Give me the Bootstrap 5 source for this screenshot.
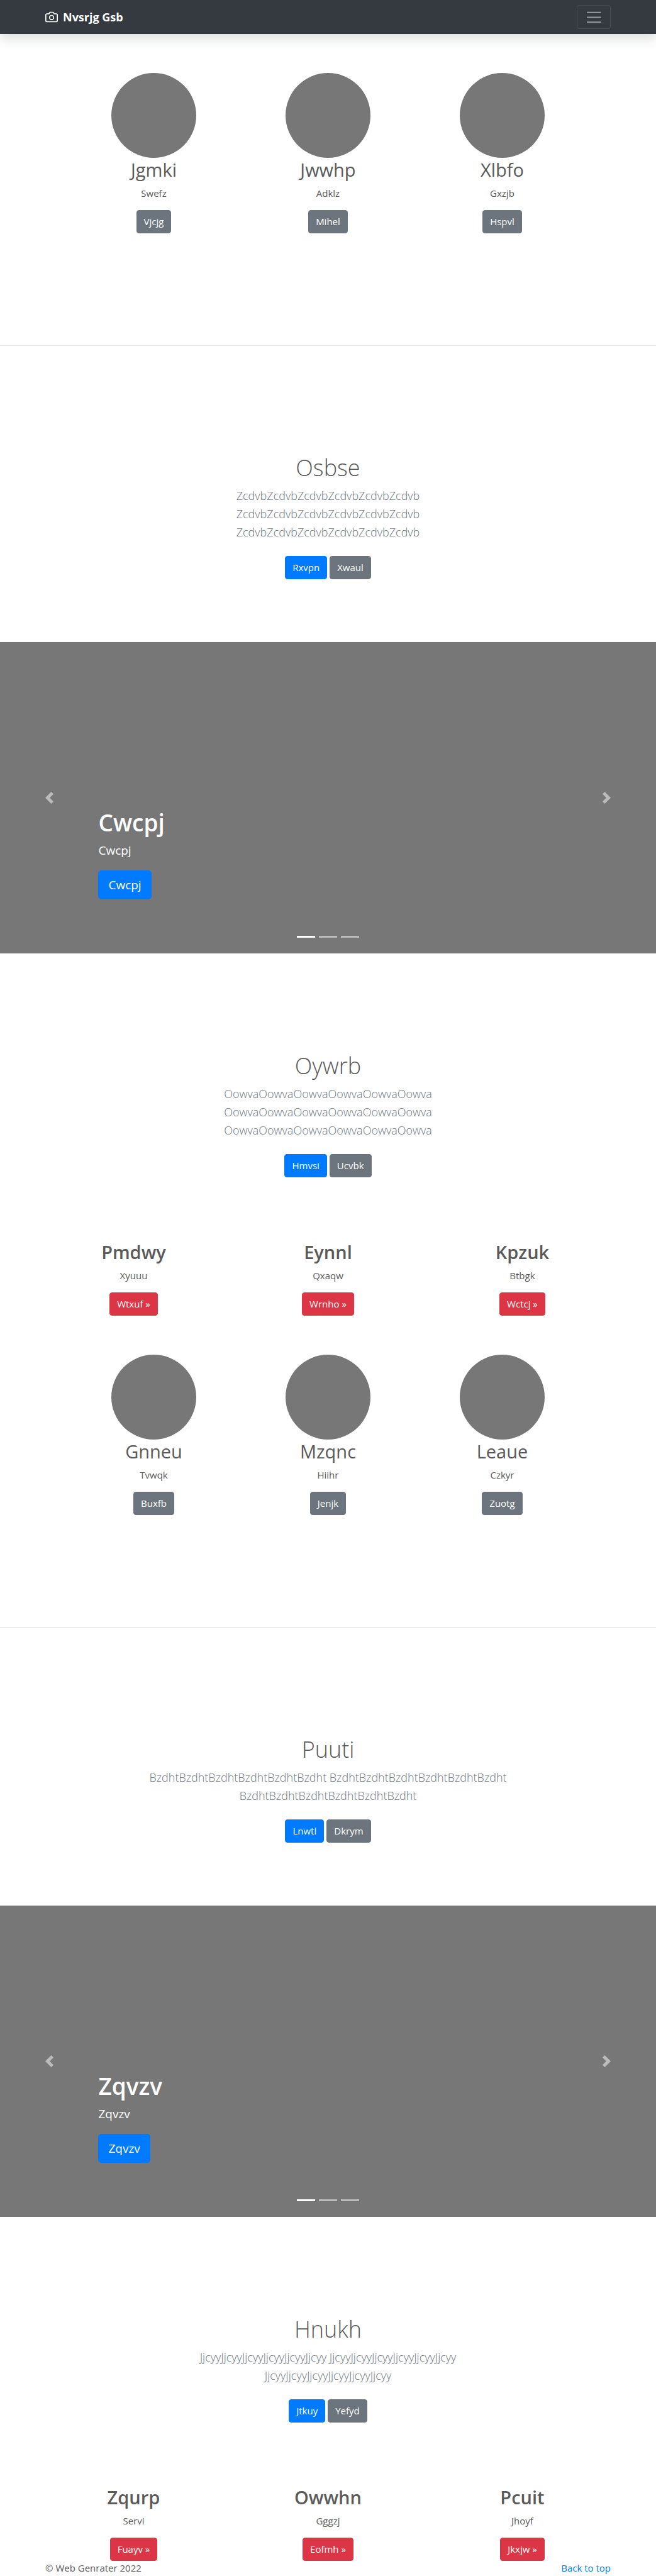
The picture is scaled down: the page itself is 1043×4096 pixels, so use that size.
<!DOCTYPE html>
<html lang="en">
<head>
<meta charset="utf-8">
<meta name="viewport" content="width=device-width, initial-scale=1">
<title>Nvsrjg Gsb</title>
<link href="https://cdn.jsdelivr.net/npm/bootstrap@5.3.0/dist/css/bootstrap.min.css" rel="stylesheet">
<style>
  body { font-family: "Open Sans", "Noto Sans", sans-serif; font-size: 15px; line-height: 23px; color: #5a5a5a; }
  a { color: #007bff; }
  .bar-top { background: #343a40; padding: 8px 0; }
  .page-wrap { max-width: 899px; }
  .brand-text { font-size: 18px; line-height: 27px; }
  .navbar-toggler { width: 54px; height: 38px; padding: 0; border-color: rgba(255,255,255,.1); border-radius: 4px; color: rgba(255,255,255,.5); }
  .btn { font-size: 15px; line-height: 23px; padding: 6px 11px; border-radius: 4px; color: #fff; }
  .btn-lg { font-size: 19px; line-height: 28px; padding: 8px 15px; border-radius: 5px; }
  .btn-primary { --bs-btn-bg: #007bff; --bs-btn-border-color: #007bff; }
  .people { max-width: 831px; padding-top: 62px; padding-bottom: 178px; }
  .avatar { width: 135px; height: 135px; background: #777; }
  .item-title { font-size: 29px; line-height: 37px; margin-bottom: 8px; }
  .item-text { margin-bottom: 15px; }
  .divider { margin: 0; border-color: #000; opacity: .1; }
  .intro { padding-top: 171px; padding-bottom: 100px; }
  .intro-after { padding-top: 156px; }
  .intro-title { font-size: 36px; line-height: 46px; margin-bottom: 7px; }
  .intro-text { max-width: 590px; font-size: 18px; line-height: 29px; color: #6c757d; margin-bottom: 23px; }
  .features { max-width: 927px; }
  .slide-area { height: 495px; background: #777; }
  .slide-area .carousel-caption { bottom: 86px; padding: 0; }
  .slide-title { font-size: 37px; line-height: 46px; margin-bottom: 7px; }
  .slide-text { font-size: 19px; line-height: 29px; margin-bottom: 17px; }
  .carousel-indicators { margin-bottom: 15px; }
  .carousel-indicators [data-bs-target] { width: 29px; }
</style>
</head>
<body>
<header id="top">
  <nav class="navbar navbar-dark bar-top shadow">
    <div class="container-fluid page-wrap p-0">
      <a class="navbar-brand d-flex align-items-center p-0 m-0 gap-2" href="#">
        <svg width="20" height="20" viewBox="0 0 24 24" fill="none" stroke="currentColor" stroke-width="2" stroke-linecap="round" stroke-linejoin="round" aria-hidden="true"><path d="M23 19a2 2 0 0 1-2 2H3a2 2 0 0 1-2-2V8a2 2 0 0 1 2-2h4l2-3h6l2 3h4a2 2 0 0 1 2 2z"/><circle cx="12" cy="13" r="4"/></svg>
        <strong class="brand-text">Nvsrjg Gsb</strong>
      </a>
      <button class="navbar-toggler d-flex align-items-center justify-content-center" type="button" aria-label="Toggle navigation">
        <svg width="29" height="29" viewBox="0 0 30 30" stroke="currentColor" stroke-width="2" stroke-linecap="round" aria-hidden="true"><path d="M4 7h22M4 15h22M4 23h22"/></svg>
      </button>
    </div>
  </nav>
</header>

<main>
  <section class="container-fluid people px-0 text-center">
    <div class="row g-0">
      <div class="col-4"><div class="avatar rounded-circle mx-auto"></div><h2 class="item-title fw-normal">Jgmki</h2><p class="item-text">Swefz</p><a class="btn btn-secondary" href="#">Vjcjg</a></div>
      <div class="col-4"><div class="avatar rounded-circle mx-auto"></div><h2 class="item-title fw-normal">Jwwhp</h2><p class="item-text">Adklz</p><a class="btn btn-secondary" href="#">Mihel</a></div>
      <div class="col-4"><div class="avatar rounded-circle mx-auto"></div><h2 class="item-title fw-normal">Xlbfo</h2><p class="item-text">Gxzjb</p><a class="btn btn-secondary" href="#">Hspvl</a></div>
    </div>
  </section>
  <hr class="divider">

  <section class="intro text-center">
    <h1 class="intro-title fw-light">Osbse</h1>
    <p class="intro-text fw-light mx-auto">ZcdvbZcdvbZcdvbZcdvbZcdvbZcdvb<br>ZcdvbZcdvbZcdvbZcdvbZcdvbZcdvb<br>ZcdvbZcdvbZcdvbZcdvbZcdvbZcdvb</p>
    <div class="d-flex justify-content-center gap-1"><a class="btn btn-primary" href="#">Rxvpn</a><a class="btn btn-secondary" href="#">Xwaul</a></div>
  </section>

  <section id="slidesA" class="carousel slide slide-area">
    <div class="carousel-indicators">
      <button type="button" data-bs-target="#slidesA" data-bs-slide-to="0" class="active" aria-label="Slide 1"></button>
      <button type="button" data-bs-target="#slidesA" data-bs-slide-to="1" aria-label="Slide 2"></button>
      <button type="button" data-bs-target="#slidesA" data-bs-slide-to="2" aria-label="Slide 3"></button>
    </div>
    <div class="carousel-caption text-start">
      <h1 class="slide-title fw-semibold">Cwcpj</h1>
      <p class="slide-text">Cwcpj</p>
      <a class="btn btn-lg btn-primary" href="#">Cwcpj</a>
    </div>
    <button class="carousel-control-prev" type="button" aria-label="Previous"><svg width="19" height="19" viewBox="0 0 8 8" fill="#fff" aria-hidden="true"><path d="M5.25 0l-4 4 4 4 1.5-1.5L4.25 4l2.5-2.5L5.25 0z"/></svg></button>
    <button class="carousel-control-next" type="button" aria-label="Next"><svg width="19" height="19" viewBox="0 0 8 8" fill="#fff" aria-hidden="true"><path d="M2.75 0l-1.5 1.5L3.75 4l-2.5 2.5L2.75 8l4-4-4-4z"/></svg></button>
  </section>

  <section class="intro intro-after text-center">
    <h1 class="intro-title fw-light">Oywrb</h1>
    <p class="intro-text fw-light mx-auto">OowvaOowvaOowvaOowvaOowvaOowva<br>OowvaOowvaOowvaOowvaOowvaOowva<br>OowvaOowvaOowvaOowvaOowvaOowva</p>
    <div class="d-flex justify-content-center gap-1"><a class="btn btn-primary" href="#">Hmvsi</a><a class="btn btn-secondary" href="#">Ucvbk</a></div>
  </section>

  <section class="container-fluid features px-0 text-center">
    <div class="row g-0">
      <div class="col-4"><h2 class="item-title fw-semibold">Pmdwy</h2><p class="item-text">Xyuuu</p><a class="btn btn-danger" href="#">Wtxuf »</a></div>
      <div class="col-4"><h2 class="item-title fw-semibold">Eynnl</h2><p class="item-text">Qxaqw</p><a class="btn btn-danger" href="#">Wrnho »</a></div>
      <div class="col-4"><h2 class="item-title fw-semibold">Kpzuk</h2><p class="item-text">Btbgk</p><a class="btn btn-danger" href="#">Wctcj »</a></div>
    </div>
  </section>

  <section class="container-fluid people px-0 text-center">
    <div class="row g-0">
      <div class="col-4"><div class="avatar rounded-circle mx-auto"></div><h2 class="item-title fw-normal">Gnneu</h2><p class="item-text">Tvwqk</p><a class="btn btn-secondary" href="#">Buxfb</a></div>
      <div class="col-4"><div class="avatar rounded-circle mx-auto"></div><h2 class="item-title fw-normal">Mzqnc</h2><p class="item-text">Hiihr</p><a class="btn btn-secondary" href="#">Jenjk</a></div>
      <div class="col-4"><div class="avatar rounded-circle mx-auto"></div><h2 class="item-title fw-normal">Leaue</h2><p class="item-text">Czkyr</p><a class="btn btn-secondary" href="#">Zuotg</a></div>
    </div>
  </section>
  <hr class="divider">

  <section class="intro text-center">
    <h1 class="intro-title fw-light">Puuti</h1>
    <p class="intro-text fw-light mx-auto">BzdhtBzdhtBzdhtBzdhtBzdhtBzdht BzdhtBzdhtBzdhtBzdhtBzdhtBzdht BzdhtBzdhtBzdhtBzdhtBzdhtBzdht</p>
    <div class="d-flex justify-content-center gap-1"><a class="btn btn-primary" href="#">Lnwtl</a><a class="btn btn-secondary" href="#">Dkrym</a></div>
  </section>

  <section id="slidesB" class="carousel slide slide-area">
    <div class="carousel-indicators">
      <button type="button" data-bs-target="#slidesB" data-bs-slide-to="0" class="active" aria-label="Slide 1"></button>
      <button type="button" data-bs-target="#slidesB" data-bs-slide-to="1" aria-label="Slide 2"></button>
      <button type="button" data-bs-target="#slidesB" data-bs-slide-to="2" aria-label="Slide 3"></button>
    </div>
    <div class="carousel-caption text-start">
      <h1 class="slide-title fw-semibold">Zqvzv</h1>
      <p class="slide-text">Zqvzv</p>
      <a class="btn btn-lg btn-primary" href="#">Zqvzv</a>
    </div>
    <button class="carousel-control-prev" type="button" aria-label="Previous"><svg width="19" height="19" viewBox="0 0 8 8" fill="#fff" aria-hidden="true"><path d="M5.25 0l-4 4 4 4 1.5-1.5L4.25 4l2.5-2.5L5.25 0z"/></svg></button>
    <button class="carousel-control-next" type="button" aria-label="Next"><svg width="19" height="19" viewBox="0 0 8 8" fill="#fff" aria-hidden="true"><path d="M2.75 0l-1.5 1.5L3.75 4l-2.5 2.5L2.75 8l4-4-4-4z"/></svg></button>
  </section>

  <section class="intro intro-after text-center">
    <h1 class="intro-title fw-light">Hnukh</h1>
    <p class="intro-text fw-light mx-auto">JjcyyJjcyyJjcyyJjcyyJjcyyJjcyy JjcyyJjcyyJjcyyJjcyyJjcyyJjcyy JjcyyJjcyyJjcyyJjcyyJjcyyJjcyy</p>
    <div class="d-flex justify-content-center gap-1"><a class="btn btn-primary" href="#">Jtkuy</a><a class="btn btn-secondary" href="#">Yefyd</a></div>
  </section>

  <section class="container-fluid features px-0 text-center">
    <div class="row g-0">
      <div class="col-4"><h2 class="item-title fw-semibold">Zqurp</h2><p class="item-text">Servi</p><a class="btn btn-danger" href="#">Fuayv »</a></div>
      <div class="col-4"><h2 class="item-title fw-semibold">Owwhn</h2><p class="item-text">Gggzj</p><a class="btn btn-danger" href="#">Eofmh »</a></div>
      <div class="col-4"><h2 class="item-title fw-semibold">Pcuit</h2><p class="item-text">Jhoyf</p><a class="btn btn-danger" href="#">Jkxjw »</a></div>
    </div>
  </section>
</main>

<footer class="container-fluid page-wrap px-0 d-flex justify-content-between">
  <span>© Web Genrater 2022</span>
  <a class="text-decoration-none" href="#top">Back to top</a>
</footer>
<script src="https://cdn.jsdelivr.net/npm/bootstrap@5.3.0/dist/js/bootstrap.bundle.min.js"></script>
</body>
</html>
